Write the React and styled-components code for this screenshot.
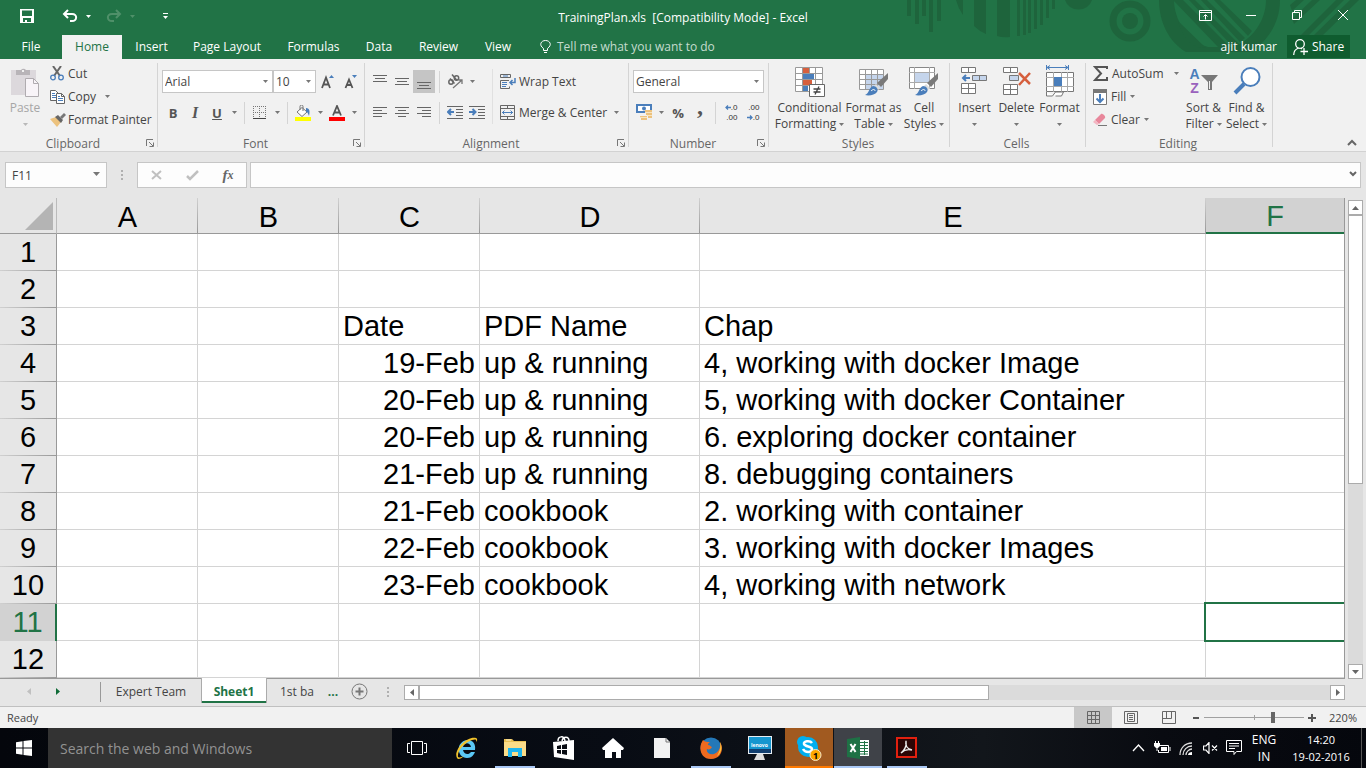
import React from "react";
import styled, { createGlobalStyle, css } from "styled-components";

const GREEN = "#217346";
const INK = "#444444";
const GREY = "#777777";
const BLUE = "#4a7ebb";
const LINE = "#c6c6c6";

const Global = createGlobalStyle`
  *, *::before, *::after { box-sizing: border-box; }
  html, body { margin: 0; padding: 0; height: 100%; }
  body, button, input, select { font-family: "Open Sans", "Noto Sans", sans-serif; font-size: 12px; color: ${INK}; }
  button { background: none; border: 0; padding: 0; margin: 0; white-space: nowrap; }
  svg { display: block; flex: none; }
`;

/* ---------- shell ---------- */
const Shell = styled.div`
  display: flex;
  flex-direction: column;
  height: 100vh;
  overflow: hidden;
  background: #e6e6e6;
`;

/* ---------- title area ---------- */
const Header = styled.header`
  position: relative;
  flex: none;
  background: ${GREEN};
  color: #fff;
`;
const Pattern = styled.svg`
  position: absolute;
  top: 0;
  right: 0;
`;
const TitleBar = styled.div`
  position: relative;
  height: 35px;
  display: grid;
  grid-template-columns: 1fr auto 1fr;
  align-items: center;
`;
const QuickAccess = styled.div`
  display: flex;
  align-items: center;
  padding-left: 15px;
  padding-bottom: 3px;
`;
const QuickButton = styled.button`
  width: ${(p) => p.$w}px;
  height: 24px;
  display: flex;
  align-items: center;
  justify-content: center;
  margin-right: ${(p) => p.$gap || 0}px;
`;
const DocTitle = styled.h1`
  margin: 0;
  font-size: 12px;
  font-weight: 400;
  white-space: pre;
`;
const WindowButtons = styled.div`
  display: flex;
  justify-content: flex-end;
  align-self: start;
`;
const WindowButton = styled.button`
  width: 46px;
  height: 30px;
  display: flex;
  align-items: center;
  justify-content: center;
`;
const TabBar = styled.nav`
  position: relative;
  height: 24px;
  display: flex;
  align-items: stretch;
`;
const RibbonTab = styled.button`
  width: ${(p) => p.$w}px;
  padding-bottom: 1px;
  color: ${(p) => (p.$active ? GREEN : "#fff")};
  background: ${(p) => (p.$active ? "#f1f1f1" : "transparent")};
`;
const TellMe = styled.button`
  display: flex;
  align-items: center;
  gap: 6px;
  margin-left: 17px;
  padding-bottom: 1px;
  color: #c5dccf;
`;
const UserName = styled.button`
  margin-left: auto;
  margin-right: 10px;
  padding-bottom: 1px;
  color: #fff;
`;
const ShareButton = styled.button`
  display: flex;
  align-items: center;
  justify-content: center;
  gap: 4px;
  width: 63px;
  height: 23px;
  margin-right: 16px;
  background: #0f5c2f;
  color: #fff;
`;

/* ---------- ribbon ---------- */
const Ribbon = styled.div`
  position: relative;
  flex: none;
  display: flex;
  height: 93px;
  background: #f1f1f1;
  border-bottom: 1px solid #d2d2d2;
`;
const GroupBox = styled.section`
  position: relative;
  width: ${(p) => p.$w}px;
  padding-top: 3px;
  display: flex;
  flex-direction: column;
  flex: none;
  &::after {
    content: "";
    position: absolute;
    right: 0;
    top: 4px;
    bottom: 4px;
    width: 1px;
    background: #d4d4d4;
  }
`;
const GroupBody = styled.div`
  height: 73px;
  display: flex;
  padding-left: ${(p) => p.$pad}px;
`;
const GroupFoot = styled.div`
  height: 16px;
  display: flex;
  align-items: center;
  padding-right: 3px;
  color: #666;
`;
const GroupName = styled.span`
  flex: 1;
  text-align: center;
`;
const Launcher = styled.button`
  width: 9px;
  height: 8px;
`;
const Stack = styled.div`
  display: flex;
  flex-direction: column;
  padding-top: ${(p) => p.$top || 0}px;
  padding-left: ${(p) => p.$left || 0}px;
  gap: ${(p) => p.$gap || 0}px;
  width: ${(p) => (p.$w ? `${p.$w}px` : "auto")};
`;
const Row = styled.div`
  display: flex;
  align-items: center;
  height: 23px;
`;
const Tool = styled.button`
  width: ${(p) => p.$w || 22}px;
  height: 23px;
  display: flex;
  align-items: center;
  justify-content: center;
  background: ${(p) => (p.$on ? "#c5c5c5" : "transparent")};
  font-size: 13px;
  font-weight: ${(p) => (p.$plain ? 400 : 700)};
  color: #555;
  ${(p) => p.$serif && css`font-family: "Liberation Serif", serif; font-style: italic; font-size: 16px;`}
  ${(p) => p.$comma && css`font-family: "Liberation Serif", serif; font-size: 24px; padding-bottom: 12px;`}
  ${(p) => p.$under && css`text-decoration: underline;`}
`;
const Rule = styled.span`
  width: 1px;
  height: 22px;
  margin: 0 4px;
  background: #d4d4d4;
`;
const TallRule = styled.span`
  width: 1px;
  height: 55px;
  margin-top: 7px;
  background: #e0e0e0;
`;
const TextTool = styled.button`
  display: flex;
  align-items: center;
  gap: ${(p) => p.$gap || 3}px;
  height: 23px;
  text-align: left;
`;
const Spaced = styled.span`
  margin-left: ${(p) => p.$m}px;
`;
const BigButton = styled.button`
  width: ${(p) => p.$w}px;
  display: flex;
  flex-direction: column;
  align-items: center;
  align-self: flex-start;
  line-height: 16px;
  color: ${(p) => (p.$off ? "#a6a6a6" : INK)};
`;
const BigIcon = styled.span`
  height: 35px;
  margin-bottom: 3px;
  display: flex;
  align-items: flex-end;
`;
const BigLine = styled.span`
  display: flex;
  align-items: center;
  justify-content: center;
  gap: 3px;
  height: 16px;
`;
const SelectBox = styled.label`
  position: relative;
  width: ${(p) => p.$w}px;
  height: 23px;
  svg { position: absolute; right: 5px; top: 10px; pointer-events: none; }
  select {
    appearance: none;
    width: 100%;
    height: 100%;
    padding: 0 2px;
    border: 1px solid ${LINE};
    border-radius: 0;
    background: #fff;
  }
`;
const CollapseButton = styled.button`
  margin: auto 9px 5px auto;
`;

/* ---------- formula bar ---------- */
const FormulaRow = styled.div`
  flex: none;
  height: 46px;
  display: flex;
  align-items: flex-start;
  padding: 10px 5px 0;
`;
const NameBox = styled.label`
  position: relative;
  width: 102px;
  height: 26px;
  svg { position: absolute; right: 7px; top: 10px; }
  input {
    width: 100%;
    height: 100%;
    padding: 0 6px;
    border: 1px solid ${LINE};
    background: #fdfdfd;
  }
`;
const GripDots = styled.svg`
  margin: 8px ${(p) => p.$right}px 0 ${(p) => p.$left}px;
`;
const FormulaButtons = styled.div`
  width: 110px;
  height: 26px;
  display: flex;
  align-items: center;
  justify-content: space-around;
  border: 1px solid ${LINE};
  background: #fdfdfd;
  margin-right: 3px;
`;
const FormulaButton = styled.button`
  width: 34px;
  height: 24px;
  display: flex;
  align-items: center;
  justify-content: center;
  font: italic 700 15px "Liberation Serif", serif;
  color: #666;
  small { font-size: 12px; }
`;
const FormulaInput = styled.label`
  flex: 1;
  position: relative;
  height: 26px;
  svg { position: absolute; right: 4px; top: 9px; }
  input {
    width: 100%;
    height: 100%;
    border: 1px solid ${LINE};
    background: #fdfdfd;
  }
`;

/* ---------- sheet ---------- */
const SheetArea = styled.main`
  flex: 1;
  min-height: 0;
  display: flex;
`;
const SheetFrame = styled.div`
  flex: 1;
  min-width: 0;
  overflow: hidden;
  border-right: 1px solid #999;
  border-bottom: 1px solid #999;
`;
const Grid = styled.table`
  width: 100%;
  table-layout: fixed;
  border-collapse: separate;
  border-spacing: 0;
  font-family: "Liberation Sans", Arial, sans-serif;
  font-size: 29px;
  line-height: 32px;
  color: #000;
`;
const Col = styled.col`
  width: ${(p) => (p.$w ? `${p.$w}px` : "auto")};
`;
const Corner = styled.td`
  height: 36px;
  padding: 0 0 0 25px;
  border-bottom: 1px solid #999;
  border-right: 1px solid #bbb;
`;
const ColHead = styled.th`
  height: 36px;
  padding: 2px 0 0;
  font-weight: 400;
  border-bottom: 1px solid #999;
  background: linear-gradient(#d0d0d0, #999) right / 1px 100% no-repeat #e6e6e6;
  ${(p) => p.$on && css`
    color: ${GREEN};
    background: #d2d2d2;
    border-bottom: 2px solid ${GREEN};
  `}
`;
const RowHead = styled.th`
  height: 37px;
  padding: 0 0 2px;
  font-weight: 400;
  border-right: 1px solid #999;
  background: linear-gradient(90deg, #d0d0d0, #999) bottom / 100% 1px no-repeat #e6e6e6;
  ${(p) => p.$on && css`
    color: ${GREEN};
    background: #d2d2d2;
    border-right: 2px solid ${GREEN};
  `}
`;
const Cell = styled.td`
  position: relative;
  height: 37px;
  padding: 0 4px;
  white-space: nowrap;
  text-align: ${(p) => (p.$right ? "right" : "left")};
  background: #fff;
  border-bottom: 1px solid #d4d4d4;
  border-right: ${(p) => (p.$last ? "0" : "1px solid #d4d4d4")};
  ${(p) => p.$selected && css`
    &::after {
      content: "";
      position: absolute;
      z-index: 1;
      inset: -2px 0 -2px -2px;
      border: 2px solid ${GREEN};
      border-right: 0;
    }
  `}
`;
const VScroll = styled.div`
  width: 15px;
  margin: 2px 3px 0 3px;
  display: flex;
  flex-direction: column;
  background: #dbdbdb;
`;
const ScrollButton = styled.button`
  width: 15px;
  height: 15px;
  flex: none;
  display: flex;
  align-items: center;
  justify-content: center;
  border: 1px solid #ababab;
  background: #fff;
`;
const Thumb = styled.div`
  flex: ${(p) => p.$size} 1 0;
  border: 1px solid #ababab;
  background: #fff;
`;
const Track = styled.div`
  flex: ${(p) => p.$size} 1 0;
`;
const SheetTabs = styled.div`
  flex: none;
  height: 28px;
  display: flex;
  align-items: flex-start;
  border-bottom: 1px solid #c0c0c0;
  padding-right: 21px;
`;
const TabArrow = styled.button`
  width: 29px;
  height: 25px;
  display: flex;
  align-items: center;
  justify-content: center;
`;
const TabDivider = styled.span`
  width: 1px;
  height: 20px;
  margin: 3px 0 0 28px;
  background: #999;
`;
const SheetTab = styled.button`
  width: ${(p) => p.$w}px;
  height: 25px;
  ${(p) => p.$active && css`
    position: relative;
    margin-top: -1px;
    padding-top: 1px;
    background: #fff;
    color: ${GREEN};
    font-weight: 700;
    border: 1px solid #ababab;
    border-width: 0 1px;
    box-shadow: inset 0 -2px ${GREEN};
  `}
`;
const MoreTabs = styled.button`
  width: 12px;
  height: 25px;
  color: ${GREEN};
  font-weight: 700;
`;
const AddSheet = styled.button`
  margin: 4px 0 0 12px;
`;
const HScroll = styled.div`
  flex: 1;
  display: flex;
  height: 15px;
  margin-top: 6px;
  background: #dbdbdb;
`;

/* ---------- status bar ---------- */
const StatusBar = styled.footer`
  flex: none;
  height: 21px;
  display: flex;
  align-items: center;
  background: #f1f1f1;
  padding: 0 9px 0 7px;
`;
const ViewButton = styled.button`
  width: 38px;
  height: 21px;
  display: flex;
  align-items: center;
  justify-content: center;
  background: ${(p) => (p.$on ? "#c8c8c8" : "transparent")};
`;
const StatusText = styled.span`
  font-size: 11px;
  line-height: 16px;
  margin-right: auto;
`;
const ZoomStep = styled.button`
  width: 16px;
  height: 20px;
  display: flex;
  align-items: center;
  justify-content: center;
`;
const ZoomSlider = styled.input`
  appearance: none;
  width: 100px;
  height: 12px;
  margin: 0;
  background:
    linear-gradient(#a0a0a0, #a0a0a0) center / 1px 5px no-repeat,
    linear-gradient(#a0a0a0, #a0a0a0) center / 100% 1px no-repeat;
  &::-webkit-slider-thumb {
    appearance: none;
    width: 4px;
    height: 11px;
    background: #666;
  }
`;
const ZoomValue = styled.button`
  width: 37px;
  text-align: right;
  font-size: 11px;
`;

/* ---------- taskbar ---------- */
const Taskbar = styled.div`
  flex: none;
  height: 40px;
  display: flex;
  background: linear-gradient(90deg, #04060c, #080c14 45%, #12161b 72%, #090b11 85%, #05070d);
  color: #fff;
`;
const StartButton = styled.button`
  width: 48px;
  display: flex;
  align-items: center;
  justify-content: center;
`;
const SearchField = styled.input`
  width: 344px;
  border: 0;
  padding: 0 12px;
  background: #333;
  color: #ccc;
  font-size: 14px;
  &::placeholder { color: #929292; opacity: 1; }
`;
const AppButton = styled.button`
  position: relative;
  width: 48px;
  margin-right: 1px;
  display: flex;
  align-items: center;
  justify-content: center;
  background: ${(p) => p.$bg || "transparent"};
  &::after {
    content: "";
    position: absolute;
    bottom: 0;
    left: ${(p) => (p.$bg ? 0 : 4)}px;
    right: ${(p) => (p.$bg ? 0 : 4)}px;
    height: 2px;
    background: ${(p) => p.$bar || "transparent"};
  }
`;
const AppList = styled.div`
  display: flex;
  margin-left: 1px;
`;
const Tray = styled.div`
  margin-left: auto;
  display: flex;
  align-items: center;
`;
const TrayButton = styled.button`
  width: 24px;
  height: 40px;
  display: flex;
  align-items: center;
  justify-content: center;
`;
const TrayText = styled.button`
  width: ${(p) => p.$w}px;
  color: #fff;
  font-size: ${(p) => p.$size || 12}px;
  line-height: 17px;
  padding-bottom: 1px;
  text-align: center;
`;
const DesktopEdge = styled.button`
  width: 5px;
  height: 40px;
  margin-left: 1px;
  border-left: 1px solid #555;
`;

/* ---------- icons ---------- */
const Svg = ({ w, h, children, ...rest }) => (
  <svg width={w} height={h} viewBox={`0 0 ${w} ${h}`} fill="none" aria-hidden="true" {...rest}>{children}</svg>
);
const Caret = ({ c = GREY }) => <Svg w={5} h={3}><path d="M0 0h5L2.500 3z" fill={c} /></Svg>;
const Lines = ({ rows }) => (
  <Svg w={14} h={14}>
    {rows.map(([x, y, w]) => <path key={y} d={`M${x} ${y}.5h${w}`} stroke="#666" />)}
  </Svg>
);
const SaveIcon = () => (
  <Svg w={14} h={14}><path d="M0 0h14v14H0z" fill="#fff" /><path d="M2 1.500h10V7H2zM3 9h8v4H7v-2H5v2H3z" fill={GREEN} /></Svg>
);
const UndoIcon = ({ flip, c }) => (
  <Svg w={16} h={14}>
    <path d={flip ? "M10 1l4 4-4 4M14 5H6c-6 0-5 7 0 7h2" : "M6 1L2 5l4 4M2 5h8c6 0 5 7 0 7H8"} stroke={c} strokeWidth="2" />
  </Svg>
);
const LauncherIcon = () => (
  <Svg w={8} h={8}><path d="M.5 7V.5H7M3 3l4 4M7.500 3.500v4h-4" stroke="#777" /></Svg>
);
const PasteIcon = () => (
  <Svg w={28} h={30}>
    <path d="M0 3h25v25H0z" fill="#dcd8dc" />
    <path d="M5 3h5a3 3 0 0 1 5 0h4v5H5z" fill="#b8b4b8" /><path d="M11 3h2v2h-2z" fill="#f1f1f1" />
    <path d="M14.500 11.500h8l5 5v13h-13z" fill="#f8f4f8" stroke="#b0acb0" /><path d="M22.500 11.500v5h5" stroke="#b0acb0" />
  </Svg>
);
const CutIcon = () => (
  <Svg w={14} h={15}>
    <path d="M3 0l7 10M11 0L4 10" stroke="#666" strokeWidth="2" />
    <circle cx="3" cy="11.500" r="2.300" stroke={BLUE} strokeWidth="1.300" /><circle cx="11" cy="11.500" r="2.300" stroke={BLUE} strokeWidth="1.300" />
  </Svg>
);
const CopyIcon = () => (
  <Svg w={15} h={14}>
    <path d="M.5.500h5l3 3v7h-8z" fill="#fff" stroke="#666" /><path d="M2 3.500h3M2 5.500h4M2 7.500h4" stroke={BLUE} />
    <path d="M6.500 3.500h5l3 3v7h-8z" fill="#fff" stroke="#666" /><path d="M11.500 3.500v3h3" stroke="#666" />
    <path d="M8 6.500h2M8 8.500h5M8 10.500h5" stroke={BLUE} />
  </Svg>
);
const PainterIcon = () => (
  <Svg w={16} h={14}>
    <path d="M0 6l6-2 5 5-4 5z" fill="#ecc27e" /><path d="M5 4l3-2 5 5-2 3z" fill="#666" /><path d="M10 4l4-4 2 2-4 4z" fill="#777" />
  </Svg>
);
const GrowFont = ({ down }) => (
  <Svg w={14} h={16}>
    <path d={down ? "M1.500 14L5 5.500 8.500 14M3 11h4" : "M1 14L5 3.500l4 10.500M2.500 10.500h5"} stroke="#555" strokeWidth="1.800" />
    <path d={down ? "M8 1h5l-2.500 3z" : "M8 4h5l-2.500-3z"} fill={BLUE} />
  </Svg>
);
const BordersIcon = () => (
  <Svg w={14} h={14}>
    <path d="M.5 0v12M6.500 0v12M12.500 0v12M0 .5h13M0 6.500h13" stroke="#777" strokeDasharray="1 1" /><path d="M0 12.500h13" stroke="#444" />
  </Svg>
);
const FillIcon = () => (
  <Svg w={16} h={16}>
    <path d="M2 7l5-4.500L12 7l-5 4.500z" fill="#fff" stroke="#777" /><path d="M5 5V1.500a1.500 1.500 0 0 1 3 0V6" stroke="#777" />
    <path d="M11 3c4 0 4 4 3 8-1-2-1-4-3-4z" fill={BLUE} /><path d="M0 12h16v4H0z" fill="#ff0" />
  </Svg>
);
const FontColorIcon = () => (
  <Svg w={16} h={16}><path d="M4 10.500L8 1l4 9.500M5.500 7.500h5" stroke="#555" strokeWidth="1.800" /><path d="M0 12h16v4H0z" fill="red" /></Svg>
);
const OrientIcon = () => (
  <Svg w={17} h={16}>
    <g stroke="#666" strokeWidth="1.500">
      <circle cx="4" cy="8" r="2.200" /><path d="M3 4.500l4.500 5" /><path d="M5 .5l5 6" /><circle cx="9.500" cy="4" r="2.200" />
    </g>
    <path d="M6 14l9-8M11.500 6H15v4" stroke="#777" strokeWidth="1.300" />
  </Svg>
);
const IndentIcon = ({ right }) => (
  <Svg w={16} h={14}>
    <path d="M0 .5h16M9 3.500h7M9 6.500h7M9 9.500h7M0 12.500h16" stroke="#666" />
    {right ? <path d="M0 6h6M3.500 3l3 3-3 3" stroke={BLUE} strokeWidth="2" /> : <path d="M1 6h6M4 3L1 6l3 3" stroke={BLUE} strokeWidth="2" />}
  </Svg>
);
const WrapIcon = () => (
  <Svg w={16} h={15}>
    <path d="M.5.500h10v3H.5zM9 6.500H.5v8h9v-2" stroke="#666" /><path d="M2 8.500h5M2 10.500h5M2 12.500h4M3 2h5" stroke={BLUE} />
    <path d="M15 4v4.500h-4M12.500 6L10 8.500l2.500 2.500" stroke={BLUE} strokeWidth="1.500" />
  </Svg>
);
const MergeIcon = () => (
  <Svg w={15} h={15}>
    <path d="M.5.500h14v14H.5zM0 3.500h15M0 11.500h15M7.500 0v3.500M7.500 11.500V15" stroke="#666" />
    <path d="M2 7.500h11M4.500 5.500l-2 2 2 2M10.500 5.500l2 2-2 2" stroke={BLUE} />
  </Svg>
);
const CurrencyIcon = () => (
  <Svg w={17} h={17}>
    <path d="M1 1h14v7H1z" fill="#fff" stroke={BLUE} strokeWidth="2" /><circle cx="8" cy="4.500" r="2" fill={BLUE} />
    <path d="M9 6h7v2H9zM10 9h6v2h-6zM4 12h7v1H4zM5 14h6v2H5zM12 12h4v2h-4z" fill="#ecc27e" />
    <path d="M9 8.500h7M4 13.500h7M11 11.500h5" stroke="#f8e4c0" />
  </Svg>
);
const Decimal = styled.span`
  display: flex;
  flex-direction: column;
  font-family: "Liberation Sans", Arial, sans-serif;
  font-size: 8px;
  line-height: 10px;
  color: #333;
`;
const DecimalLine = styled.span`
  display: flex;
  align-items: center;
  justify-content: flex-end;
  height: 10px;
`;
const SmallArrow = ({ left }) => (
  <Svg w={6} h={5}><path d={left ? "M6 2.500H1M3 .5l-2 2 2 2" : "M0 2.500h5M3 .5l2 2-2 2"} stroke={BLUE} strokeWidth="1.300" /></Svg>
);
const CondIcon = () => (
  <Svg w={30} h={30}>
    <path d="M0 0h28v25H0z" fill="#fff" />
    <path d="M.5.500h27v24H.5zM7.500 0v24M14.500 0v24M20.500 0v24M0 6.500h27M0 12.500h27M0 18.500h27" stroke="#999" />
    <path d="M8 1h6v5H8zM8 13h9v5H8z" fill="#d65f3d" /><path d="M8 7h11v5H8zM8 19h5v5H8z" fill={BLUE} />
    <path d="M14.500 17.500h15v12h-15z" fill="#fff" stroke="#666" /><path d="M18.500 22h7M18.500 25h7M24 19.500l-4 8" stroke="#444" strokeWidth="1.300" />
  </Svg>
);
const Brush = () => (
  <>
    <path d="M29 6v6l-7 8-4-4z" fill="#7a7a7a" /><path d="M17 17l4 4-2 2-4-4z" fill="#ddd" />
    <path d="M14 19c3 0 6 3 4 6s-8 4-12 3c4-1 4-8 8-9z" fill={BLUE} /><path d="M12 24c2-2 4-2 4 0" stroke="#fff" />
  </>
);
const TableIcon = () => (
  <Svg w={30} h={30}>
    <path d="M0 2h25v20H0z" fill="#fff" /><path d="M6 7h18v15H6z" fill="#c5d5ec" />
    <path d="M.5 2.500h24v20H.5zM6.500 2v20M12.500 2v20M18.500 2v20M0 7.500h25M0 12.500h25M0 17.500h25" stroke="#999" /><Brush />
  </Svg>
);
const CellStyleIcon = () => (
  <Svg w={30} h={30}>
    <path d="M.5.500h25v21H.5z" fill="#fff" stroke="#888" /><path d="M5.500 0v22M20.500 0v22M0 5.500h26M0 15.500h26" stroke="#aaa" />
    <path d="M6 6h14v9H6z" fill="#c5d5ec" /><Brush />
  </Svg>
);
const InsertIcon = () => (
  <Svg w={27} h={30}>
    <path d="M.5.500h14v5H.5zM7.500 0v6M.5 16.500h14v10H.5zM7.500 16v11M0 21.500h15" fill="#fff" stroke="#777" />
    <path d="M11.500 8.500h14v5h-14zM18.500 8v6" fill="#c5d5ec" stroke="#777" /><path d="M2 11h7M5 8l-3 3 3 3" stroke={BLUE} strokeWidth="2" />
  </Svg>
);
const DeleteIcon = () => (
  <Svg w={28} h={30}>
    <path d="M.5.500h14v5H.5zM7.500 0v6M.5 17.500h14v10H.5zM7.500 17v11M0 22.500h15" fill="#fff" stroke="#777" />
    <path d="M6.500 8.500h9v5h-9z" fill="#c5d5ec" stroke="#777" /><path d="M16 6l11 11M27 6L16 18" stroke="#d65f3d" strokeWidth="2.500" />
  </Svg>
);
const FormatIcon = () => (
  <Svg w={28} h={32}>
    <path d="M.5 0v5M22.500 0v5M1 2.500h21M4 .5l-3 2 3 2M19 .5l3 2-3 2" stroke={BLUE} />
    <path d="M.5 7.500h27v19H.5z" fill="#fff" stroke="#777" /><path d="M7.500 7v20M15.500 7v20M21.500 7v20M0 12.500h28M0 21.500h28" stroke="#aaa" />
    <path d="M8 12h8v9H8z" fill={BLUE} /><path d="M.5 27v4h6l3-4h8l-2 4h-6" fill="#fff" stroke="#777" />
  </Svg>
);
const SigmaIcon = () => <Svg w={15} h={15}><path d="M14 3V1H2l6 6.500L2 14h12v-3" stroke="#555" strokeWidth="2" /></Svg>;
const FillDownIcon = () => (
  <Svg w={14} h={16}><path d="M.5.500h13v15H.5z" fill="#fff" stroke="#777" /><path d="M0 0h14v4H0z" fill="#777" /><path d="M7 5v8M3.500 9.500L7 13l3.500-3.500" stroke={BLUE} strokeWidth="2" /></Svg>
);
const EraserIcon = () => (
  <Svg w={14} h={13}><path d="M2 7l6-6c1-1 5 2 4 4l-6 6z" fill="#e8879b" /><path d="M0 9l2-2 4 4-2 1z" fill="#f3b6c2" /><path d="M5 12.500h9" stroke="#777" /></Svg>
);
const SortMark = styled.span`
  display: flex;
  align-items: flex-start;
  height: 30px;
`;
const SortLetters = styled.span`
  display: flex;
  flex-direction: column;
  width: 11px;
  font: 700 14px/14px "Liberation Sans", sans-serif;
  color: ${BLUE};
  text-align: center;
`;
const ZLetter = styled.span`
  color: #9a62bd;
`;
const SortIcon = () => (
  <SortMark>
    <SortLetters><span>A</span><ZLetter>Z</ZLetter></SortLetters>
    <Svg w={18} h={24}><path d="M1 8h17l-6 7v8H8v-8z" fill="#777" /><path d="M9.500 14v8" stroke="#eee" /></Svg>
  </SortMark>
);
const FindIcon = () => (
  <Svg w={28} h={30}><path d="M2 26l9-9" stroke={BLUE} strokeWidth="4" /><circle cx="17.500" cy="10" r="9" fill="#fff" stroke={BLUE} strokeWidth="2" /></Svg>
);

/* ---------- composite parts ---------- */
const Group = ({ name, w, pad, launcher, children }) => (
  <GroupBox $w={w} aria-label={name}>
    <GroupBody $pad={pad}>{children}</GroupBody>
    <GroupFoot>
      <GroupName>{name}</GroupName>
      {launcher && <Launcher aria-label={`${name} settings`}><LauncherIcon /></Launcher>}
    </GroupFoot>
  </GroupBox>
);
const Big = ({ w, icon, first, second, off }) => (
  <BigButton $w={w} $off={off}>
    <BigIcon>{icon}</BigIcon>
    <BigLine>{first}</BigLine>
    <BigLine>{second}<Caret c={off ? "#b8b8b8" : GREY} /></BigLine>
  </BigButton>
);
const Dropdown = ({ w, label, value }) => (
  <SelectBox $w={w}>
    <select aria-label={label} defaultValue={value}><option>{value}</option></select>
    <Caret />
  </SelectBox>
);
const Drop = ({ label }) => <Tool $w={12} aria-label={label}><Caret /></Tool>;
const Grip = ({ left, right }) => (
  <GripDots $left={left} $right={right} width="3" height="11" viewBox="0 0 3 11" aria-hidden="true">
    <path d="M0 0h2v2H0zM0 4h2v2H0zM0 8h2v2H0z" fill="#b0b0b0" />
  </GripDots>
);

const tabs = [["File", 62], ["Home", 60], ["Insert", 59], ["Page Layout", 92], ["Formulas", 81], ["Data", 50], ["Review", 69], ["View", 50]];
const columns = ["A", "B", "C", "D", "E", "F"];
const sheet = {
  3: ["Date", "PDF Name", "Chap"],
  4: ["19-Feb", "up & running", "4, working with docker Image"],
  5: ["20-Feb", "up & running", "5, working with docker Container"],
  6: ["20-Feb", "up & running", "6. exploring docker container"],
  7: ["21-Feb", "up & running", "8. debugging containers"],
  8: ["21-Feb", "cookbook", "2. working with container"],
  9: ["22-Feb", "cookbook", "3. working with docker Images"],
  10: ["23-Feb", "cookbook", "4, working with network"],
};

const HeaderPattern = () => (
  <Pattern width="486" height="59" viewBox="0 0 486 59" aria-hidden="true">
    <g fill="#1e643c">
      <path d="M27 0h4v16h-4zM35 0h4v24h-4zM42 0h4v16h-4zM49 0h4v32h-4zM57 0h4v21h-4z" />
      <path d="M76 0h7v15Q78 8 76 0zM94 0h12v34q-7-3-12-8zM117 0h13v37q-7 1-13-1zM137 0h3v36h-3zM143 0h3v35h-3zM148 0h3v33h-3zM154 0h3v29h-3zM160 0h3v25h-3zM166 0h3v18h-3zM172 0h3v9h-3z" />
      <path d="M185 0a14 13 0 0 0 27 0z" /><circle cx="250" cy="21" r="8" />
      <path d="M279 0h15c0 20 14 42 34 47h24c18-5 34-25 34-47h14c0 24-14 43-30 52h-64c-17-10-27-30-27-52z" />
      <path d="M293 0h10l47 47h-12zM309 0h6l44 44-5 4zM321 0h6l38 38-5 4zM334 0h6l32 31-4 5zM298 21l28 27-9-1q-15-8-19-26z" />
      <path d="M410 5l6-5h8l-12 11zM412 19l20-19h8l-26 24zM421 35l35-35h8l-39 39zM434 35l36-35h9l-36 35z" />
    </g>
    <circle cx="250" cy="21" r="17" fill="none" stroke="#1e643c" strokeWidth="7" />
  </Pattern>
);

const ExcelRibbon = () => (
  <Ribbon>
    <Group name="Clipboard" w={158} pad={4} launcher>
      <Big w={42} off icon={<PasteIcon />} first="Paste" second="" />
      <Stack $left={4} $w={104}>
        <TextTool $gap={4}><CutIcon />Cut</TextTool>
        <TextTool $gap={3}><CopyIcon />Copy<Spaced $m={6}><Caret /></Spaced></TextTool>
        <TextTool $gap={2}><PainterIcon />Format Painter</TextTool>
      </Stack>
    </Group>
    <Group name="Font" w={207} pad={4} launcher>
      <Stack $top={8} $gap={8}>
        <Row>
          <Dropdown w={111} label="Font" value="Arial" /><Dropdown w={43} label="Font size" value="10" />
          <Tool $w={24} aria-label="Increase font size"><GrowFont /></Tool><Tool aria-label="Decrease font size"><GrowFont down /></Tool>
        </Row>
        <Row>
          <Tool>B</Tool><Tool $serif>I</Tool><Tool $under>U</Tool><Drop label="Underline options" /><Rule />
          <Tool aria-label="Borders"><BordersIcon /></Tool><Drop label="Border options" /><Rule />
          <Tool aria-label="Fill color"><FillIcon /></Tool><Drop label="Fill options" />
          <Tool aria-label="Font color"><FontColorIcon /></Tool><Drop label="Font color options" />
        </Row>
      </Stack>
    </Group>
    <Group name="Alignment" w={264} pad={4} launcher>
      <Stack $top={8} $gap={8} $w={123}>
        <Row>
          <Tool aria-label="Top align"><Lines rows={[[0, 0, 14], [2, 3, 10], [0, 6, 14]]} /></Tool>
          <Tool aria-label="Middle align"><Lines rows={[[0, 3, 14], [2, 6, 10], [0, 9, 14]]} /></Tool>
          <Tool $on aria-label="Bottom align"><Lines rows={[[0, 7, 14], [2, 10, 10], [0, 13, 14]]} /></Tool>
          <Rule />
          <Tool aria-label="Orientation"><OrientIcon /></Tool><Drop label="Orientation options" />
        </Row>
        <Row>
          <Tool aria-label="Align left"><Lines rows={[[0, 1, 14], [0, 4, 9], [0, 7, 14], [0, 10, 9]]} /></Tool>
          <Tool aria-label="Center"><Lines rows={[[0, 1, 14], [3, 4, 8], [0, 7, 14], [3, 10, 8]]} /></Tool>
          <Tool aria-label="Align right"><Lines rows={[[0, 1, 14], [5, 4, 9], [0, 7, 14], [5, 10, 9]]} /></Tool>
          <Rule />
          <Tool aria-label="Decrease indent"><IndentIcon /></Tool><Tool aria-label="Increase indent"><IndentIcon right /></Tool>
        </Row>
      </Stack>
      <TallRule />
      <Stack $top={8} $gap={8}>
        <Spaced $m={7}><TextTool><WrapIcon />Wrap Text</TextTool></Spaced>
        <Spaced $m={7}><TextTool $gap={4}><MergeIcon />Merge &amp; Center<Spaced $m={3}><Caret /></Spaced></TextTool></Spaced>
      </Stack>
    </Group>
    <Group name="Number" w={140} pad={4} launcher>
      <Stack $top={8} $gap={8}>
        <Row><Dropdown w={131} label="Number format" value="General" /></Row>
        <Row>
          <Tool aria-label="Currency"><CurrencyIcon /></Tool><Drop label="Currency options" />
          <Tool>%</Tool><Tool $comma>,</Tool><Rule />
          <Tool $plain aria-label="Increase decimal"><Decimal><DecimalLine><SmallArrow left />.0</DecimalLine><DecimalLine>.00</DecimalLine></Decimal></Tool>
          <Tool $plain aria-label="Decrease decimal"><Decimal><DecimalLine>.00</DecimalLine><DecimalLine><SmallArrow />.0</DecimalLine></Decimal></Tool>
        </Row>
      </Stack>
    </Group>
    <Group name="Styles" w={181} pad={5}>
      <Big w={71} icon={<CondIcon />} first="Conditional" second="Formatting" />
      <Big w={57} icon={<TableIcon />} first="Format as" second="Table" />
      <Big w={44} icon={<CellStyleIcon />} first="Cell" second="Styles" />
    </Group>
    <Group name="Cells" w={136} pad={4}>
      <Big w={41} icon={<InsertIcon />} first="Insert" second="" />
      <Big w={43} icon={<DeleteIcon />} first="Delete" second="" />
      <Big w={43} icon={<FormatIcon />} first="Format" second="" />
    </Group>
    <Group name="Editing" w={187} pad={7}>
      <Stack $w={89}>
        <TextTool $gap={4}><SigmaIcon />AutoSum<Spaced $m={6}><Caret /></Spaced></TextTool>
        <TextTool $gap={4}><FillDownIcon />Fill<Caret /></TextTool>
        <TextTool $gap={4}><EraserIcon />Clear<Caret /></TextTool>
      </Stack>
      <Big w={43} icon={<SortIcon />} first="Sort &amp;" second="Filter" />
      <Big w={43} icon={<FindIcon />} first="Find &amp;" second="Select" />
    </Group>
    <CollapseButton aria-label="Collapse ribbon"><Svg w={10} h={7}><path d="M1 6l4-4 4 4" stroke="#666" strokeWidth="2" /></Svg></CollapseButton>
  </Ribbon>
);

const SheetGrid = () => (
  <SheetFrame>
    <Grid>
      <colgroup><Col $w={57} /><Col $w={141} /><Col $w={141} /><Col $w={141} /><Col $w={220} /><Col $w={506} /><Col /></colgroup>
      <thead>
        <tr>
          <Corner><Svg w={28} h={28}><path d="M28 0v28H0z" fill="#b4b4b4" /></Svg></Corner>
          {columns.map((c) => <ColHead key={c} scope="col" $on={c === "F"}>{c}</ColHead>)}
        </tr>
      </thead>
      <tbody>
        {Array.from({ length: 12 }, (_, i) => i + 1).map((n) => (
          <tr key={n}>
            <RowHead scope="row" $on={n === 11}>{n}</RowHead>
            {columns.map((c, i) => (
              <Cell key={c} $last={c === "F"} $selected={n === 11 && c === "F"} $right={c === "C" && n > 3}>
                {sheet[n] && sheet[n][i - 2]}
              </Cell>
            ))}
          </tr>
        ))}
      </tbody>
    </Grid>
  </SheetFrame>
);

const WindowsTaskbar = () => (
  <Taskbar>
    <StartButton aria-label="Start"><Svg w={16} h={16}><path d="M0 2.200l6.500-1v6.300H0zM7.500 1L16 0v7.500H7.500zM0 8.500h6.500v6.300l-6.500-1zM7.500 8.500H16V16l-8.500-1z" fill="#fff" /></Svg></StartButton>
    <SearchField aria-label="Search" placeholder="Search the web and Windows" />
    <AppList>
      <AppButton aria-label="Task view"><Svg w={20} h={14}><path d="M4.500.500h11v13h-11zM3 2.500H.5v9H3M17 2.500h2.500v9H17" stroke="#fff" /></Svg></AppButton>
      <AppButton aria-label="Internet Explorer">
        <Svg w={24} h={24}>
          <path d="M20 18c-2 3-4 4-7 4-10 0-12-16 0-18 6 0 9 4 8 10H9c1 5 6 5 8 2h4zM9 11h8c-1-5-7-5-8 0z" fill="#5ac8f5" fillRule="evenodd" />
          <path d="M3 22C-1 15 12 0 22 2c2 1 1 3 0 4 1-3-1-3-4-2C10 7 3 15 4 21c1 1 4 0 6-1-3 3-6 4-7 2z" fill="#f2c32c" />
        </Svg>
      </AppButton>
      <AppButton $bar="#aac8f5" aria-label="File Explorer">
        <Svg w={22} h={20}><path d="M0 1h8l2 2h12v15H0z" fill="#e8bf55" /><path d="M0 4h22v14H0z" fill="#fbdc88" /><path d="M4 10h14v9h-4v-5H8v5H4z" fill="#1fb5ee" /><path d="M2 2h5" stroke="#fff3c9" /></Svg>
      </AppButton>
      <AppButton aria-label="Store">
        <Svg w={22} h={24}><path d="M5 5c0-5 6-6 7 0M9 5c1-5 7-5 7 0" stroke="#fff" strokeWidth="1.500" /><path d="M0 6l21-2v20L1 21z" fill="#fff" /><path d="M4 10l4-1v4H4zM9 9l5-1v5H9zM4 14h4v4l-4-1zM9 14h5v5l-5-1z" fill="#080b12" /></Svg>
      </AppButton>
      <AppButton aria-label="Home"><Svg w={22} h={20}><path d="M11 0l11 10-1 2h-2v8h-5v-6h-4v6H3v-8H1L0 10z" fill="#fff" /></Svg></AppButton>
      <AppButton aria-label="Document"><Svg w={16} h={20}><path d="M0 0h12l4 4v16H0z" fill="#f2f2f2" /><path d="M12 0v4h4" stroke="#777" /></Svg></AppButton>
      <AppButton $bar="#aac8f5" aria-label="Firefox">
        <Svg w={22} h={22}>
          <circle cx="11" cy="11" r="10.500" fill="#2478b8" /><path d="M3 3c-5 7-3 19 8 19s13-11 9-17c1 5-1 10-6 12-5 1-8-2-7-5 2 1 4 0 5-2-1 0-2-2-4-2 0-2 1-2 2-3-3 0-5 0-7-2z" fill="#ee6a1f" /><path d="M20 5c3 6 1 11-3 14 3-5 4-9 3-14z" fill="#fbc43a" />
        </Svg>
      </AppButton>
      <AppButton aria-label="Lenovo">
        <Svg w={24} h={24}><path d="M0 0h24v18H0z" fill="#e6edf2" /><path d="M1 1h22v12H1z" fill="#1596cf" /><path d="M1 13h22v4H1z" fill="#123f70" /><path d="M9 18h6l2 6H6z" fill="#ddd" /><text x="3" y="11" fontSize="5" fontWeight="700" fill="#fff">lenovo</text></Svg>
      </AppButton>
      <AppButton $bg="#a15a20" $bar="#ff7a00" aria-label="Skype">
        <Svg w={26} h={26}>
          <circle cx="7" cy="7" r="6" fill="#00aff0" /><circle cx="12" cy="12" r="10" fill="#00aff0" /><circle cx="17" cy="17" r="6" fill="#00aff0" />
          <path d="M16 8c-2-3-9-2-8 1 1 3 8 2 8 5 0 4-7 4-9 0" stroke="#fff" strokeWidth="2.500" />
          <circle cx="19.500" cy="20" r="5.500" fill="#ffa800" stroke="#f3e4c8" /><text x="17" y="23.500" fontSize="9" fontWeight="700" fill="#000">1</text>
        </Svg>
      </AppButton>
      <AppButton $bg="#3f4248" $bar="#aac8f5" aria-label="Excel">
        <Svg w={22} h={22}>
          <path d="M12 3h10v16H12z" fill="#fff" /><path d="M13 5.500h8M13 8.500h8M13 11.500h8M13 14.500h8M13 17h8M17.500 4v14" stroke={GREEN} /><path d="M0 2l13-2v22L0 20z" fill="#1e7145" /><path d="M3.500 7l5 8M8.500 7l-5 8" stroke="#fff" strokeWidth="2" />
        </Svg>
      </AppButton>
      <AppButton $bar="#aac8f5" aria-label="Acrobat Reader">
        <Svg w={22} h={22}><path d="M1 1h19v19H1z" fill="#2b0505" stroke="#e2200f" strokeWidth="2" /><path d="M10 4c-1 5 2 8 6 9-4-1-8 0-11 3 3-2 6-7 5-12z" stroke="#eee" strokeWidth="1.400" /></Svg>
      </AppButton>
    </AppList>
    <Tray>
      <TrayButton aria-label="Hidden icons"><Svg w={13} h={8}><path d="M1 7l5.500-6L12 7" stroke="#fff" strokeWidth="1.300" /></Svg></TrayButton>
      <TrayButton aria-label="Battery"><Svg w={17} h={14}><path d="M5 4.500h9.500v7H4.500V9M16 6v4" stroke="#fff" /><path d="M7 6h6v4H7z" fill="#fff" /><path d="M0 2h6v3l-2 2H2L0 5zM1 0h1v2H1zM4 0h1v2H4zM2.500 7h1v3h-1z" fill="#fff" /></Svg></TrayButton>
      <TrayButton aria-label="Network"><Svg w={14} h={13}><path d="M1 13C1 6 6 1 13 1M4 13c0-5 4-9 9-9M7 13c0-3 3-6 6-6" stroke="#ddd" strokeWidth="1.300" /><path d="M9 13c0-2 2-3 4-3v3z" fill="#fff" /></Svg></TrayButton>
      <TrayButton aria-label="Volume"><Svg w={15} h={12}><path d="M.5 4H3l3-3.500v11L3 8H.5zM9 3.500l5 5M14 3.500l-5 5" stroke="#fff" strokeWidth="1.200" /></Svg></TrayButton>
      <TrayButton aria-label="Notifications"><Svg w={16} h={16}><path d="M.5.500h15v11h-5L8 14.500V11.500H.5zM3 3.500h10M3 6h10M3 8.500h6" stroke="#fff" /></Svg></TrayButton>
      <TrayText $w={36}>ENG<br />IN</TrayText>
      <TrayText $w={78} $size={11}>14:20<br />19-02-2016</TrayText>
      <DesktopEdge aria-label="Show desktop" />
    </Tray>
  </Taskbar>
);

export default function App() {
  return (
    <Shell>
      <Global />
      <Header>
        <HeaderPattern />
        <TitleBar>
          <QuickAccess>
            <QuickButton $w={24} $gap={19} aria-label="Save"><SaveIcon /></QuickButton>
            <QuickButton $w={24} aria-label="Undo"><UndoIcon c="#fff" /></QuickButton>
            <QuickButton $w={12} $gap={8} aria-label="Undo history"><Caret c="#fff" /></QuickButton>
            <QuickButton $w={24} aria-label="Redo"><UndoIcon flip c="#4f9069" /></QuickButton>
            <QuickButton $w={12} $gap={21} aria-label="Redo history"><Caret c="#4f9069" /></QuickButton>
            <QuickButton $w={12} aria-label="Customize toolbar"><Svg w={5} h={6}><path d="M0 .5h5" stroke="#fff" /><path d="M0 3h5L2.500 6z" fill="#fff" /></Svg></QuickButton>
          </QuickAccess>
          <DocTitle>{"TrainingPlan.xls  [Compatibility Mode] - Excel"}</DocTitle>
          <WindowButtons>
            <WindowButton aria-label="Ribbon display options"><Svg w={13} h={11}><path d="M.5.500h12v10H.5zM0 2.500h13M6.500 9.500V5M4.500 6.500l2-2 2 2" stroke="#fff" /></Svg></WindowButton>
            <WindowButton aria-label="Minimize"><Svg w={10} h={1}><path d="M0 .5h10" stroke="#fff" /></Svg></WindowButton>
            <WindowButton aria-label="Restore"><Svg w={10} h={10}><path d="M.5 2.500h7v7h-7zM2.500 2.500v-2h7v7h-2" stroke="#fff" /></Svg></WindowButton>
            <WindowButton aria-label="Close"><Svg w={10} h={10}><path d="M0 0l10 10M10 0L0 10" stroke="#fff" /></Svg></WindowButton>
          </WindowButtons>
        </TitleBar>
        <TabBar>
          {tabs.map(([t, w]) => <RibbonTab key={t} $w={w} $active={t === "Home"}>{t}</RibbonTab>)}
          <TellMe><Svg w={11} h={14}><path d="M3.500 10.500v-2C-1.500 5 1 .5 5.500.5s7 4.500 2 8v2zM4 12.500h3" stroke="#fff" /></Svg>Tell me what you want to do</TellMe>
          <UserName>ajit kumar</UserName>
          <ShareButton><Svg w={15} h={16}><circle cx="7" cy="5" r="4.300" stroke="#fff" strokeWidth="1.300" /><path d="M.7 16c0-4 2-6 5-7M8 9l1 1M11 9v7M7.500 12.500H15" stroke="#fff" strokeWidth="1.300" /></Svg>Share</ShareButton>
        </TabBar>
      </Header>
      <ExcelRibbon />
      <FormulaRow>
        <NameBox><input aria-label="Name box" defaultValue="F11" /><Svg w={7} h={4}><path d="M0 0h7L3.500 4z" fill={GREY} /></Svg></NameBox>
        <Grip left={14} right={13} />
        <FormulaButtons>
          <FormulaButton aria-label="Cancel"><Svg w={11} h={10}><path d="M1 1l9 8M10 1L1 9" stroke="#c0c0c0" strokeWidth="2" /></Svg></FormulaButton>
          <FormulaButton aria-label="Enter"><Svg w={13} h={11}><path d="M1 6l3 3 8-8" stroke="#c0c0c0" strokeWidth="2.500" /></Svg></FormulaButton>
          <FormulaButton aria-label="Insert function">f<small>x</small></FormulaButton>
        </FormulaButtons>
        <FormulaInput><input aria-label="Formula" /><Svg w={8} h={7}><path d="M1 1l3 3 3-3" stroke="#666" strokeWidth="2" /></Svg></FormulaInput>
      </FormulaRow>
      <SheetArea>
        <SheetGrid />
        <VScroll>
          <ScrollButton aria-label="Scroll up"><Svg w={7} h={4}><path d="M0 4h7L3.500 0z" fill="#666" /></Svg></ScrollButton>
          <Thumb $size={268} /><Track $size={181} />
          <ScrollButton aria-label="Scroll down"><Svg w={7} h={4}><path d="M0 0h7L3.500 4z" fill="#666" /></Svg></ScrollButton>
        </VScroll>
      </SheetArea>
      <SheetTabs>
        <Spaced $m={14}><TabArrow aria-label="Previous sheet"><Svg w={4} h={7}><path d="M4 0v7L0 3.500z" fill="#c0c0c0" /></Svg></TabArrow></Spaced>
        <TabArrow aria-label="Next sheet"><Svg w={4} h={7}><path d="M0 0v7l4-3.500z" fill="#0f6b37" /></Svg></TabArrow>
        <TabDivider />
        <SheetTab $w={100}>Expert Team</SheetTab>
        <SheetTab $w={66} $active>Sheet1</SheetTab>
        <SheetTab $w={60}>1st ba</SheetTab>
        <MoreTabs>...</MoreTabs>
        <AddSheet aria-label="New sheet"><Svg w={17} h={17}><circle cx="8.500" cy="8.500" r="7.500" stroke="#777" /><path d="M4.500 8.500h8M8.500 4.500v8" stroke="#777" strokeWidth="2" /></Svg></AddSheet>
        <Grip left={19} right={14} />
        <HScroll>
          <ScrollButton aria-label="Scroll left"><Svg w={4} h={7}><path d="M4 0v7L0 3.500z" fill="#666" /></Svg></ScrollButton>
          <Thumb $size={569} /><Track $size={342} />
          <ScrollButton aria-label="Scroll right"><Svg w={4} h={7}><path d="M0 0v7l4-3.500z" fill="#666" /></Svg></ScrollButton>
        </HScroll>
      </SheetTabs>
      <StatusBar>
        <StatusText>Ready</StatusText>
        <ViewButton $on aria-label="Normal view"><Svg w={13} h={13}><path d="M.5.500h12v12H.5zM4.500 0v13M8.500 0v13M0 4.500h13M0 8.500h13" stroke="#666" /></Svg></ViewButton>
        <ViewButton aria-label="Page layout view"><Svg w={14} h={13}><path d="M.5.500h13v12H.5zM3.500 2.500h7v8h-7zM5 4.500h4M5 6.500h4M5 8.500h4" stroke="#666" /></Svg></ViewButton>
        <ViewButton aria-label="Page break view"><Svg w={14} h={13}><path d="M.5.500h13v12H.5zM4.500 0v7.500M9.500 0v7.500H0" stroke="#666" /></Svg></ViewButton>
        <ZoomStep aria-label="Zoom out"><Svg w={6} h={2}><path d="M0 1h6" stroke="#555" strokeWidth="2" /></Svg></ZoomStep>
        <ZoomSlider type="range" min="0" max="100" defaultValue="70" aria-label="Zoom" />
        <ZoomStep aria-label="Zoom in"><Svg w={8} h={8}><path d="M0 4h8M4 0v8" stroke="#555" strokeWidth="2" /></Svg></ZoomStep>
        <ZoomValue>220%</ZoomValue>
      </StatusBar>
      <WindowsTaskbar />
    </Shell>
  );
}
